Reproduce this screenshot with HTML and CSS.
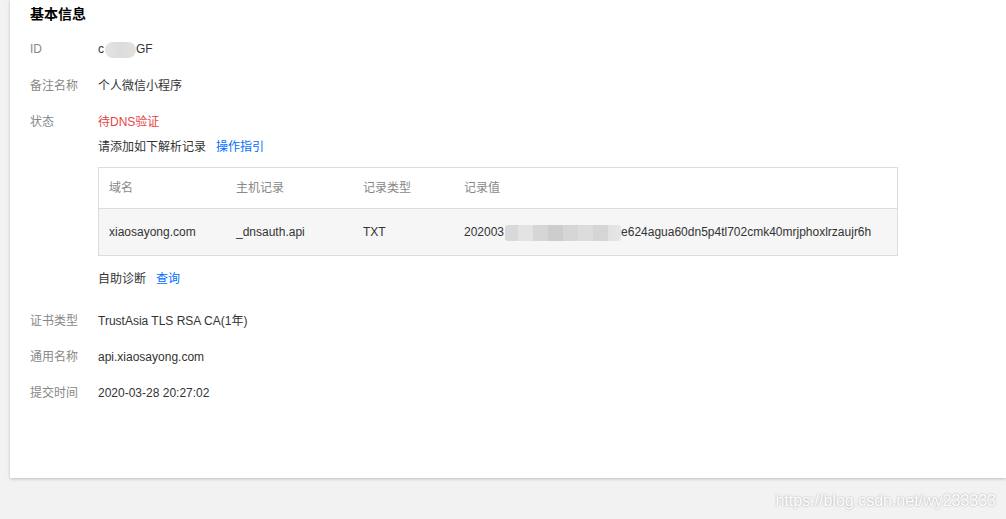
FILE: index.html
```html
<!DOCTYPE html>
<html lang="zh-CN">
<head>
<meta charset="utf-8">
<title>基本信息</title>
<link rel="stylesheet" href="styles.css">
</head>
<body>
<div class="page">
  <div class="card">
    <h3 class="title">基本信息</h3>
    <div class="row first">
      <div class="label">ID</div>
      <div class="value">c<span class="blur blur-id"></span>GF</div>
    </div>
    <div class="row r2">
      <div class="label">备注名称</div>
      <div class="value">个人微信小程序</div>
    </div>
    <div class="row">
      <div class="label">状态</div>
      <div class="value">
        <div class="line danger">待DNS验证</div>
        <div class="line tip">请添加如下解析记录<a class="link gap" href="#">操作指引</a></div>
        <table class="records">
          <thead>
            <tr><th class="c1">域名</th><th class="c2">主机记录</th><th class="c3">记录类型</th><th>记录值</th></tr>
          </thead>
          <tbody>
            <tr><td>xiaosayong.com</td><td>_dnsauth.api</td><td>TXT</td><td>202003<span class="blur blur-val"></span>e624agua60dn5p4tl702cmk40mrjphoxlrzaujr6h</td></tr>
          </tbody>
        </table>
        <div class="line diag">自助诊断<a class="link gap" href="#">查询</a></div>
      </div>
    </div>
    <div class="row cert">
      <div class="label">证书类型</div>
      <div class="value">TrustAsia TLS RSA CA(1年)</div>
    </div>
    <div class="row">
      <div class="label">通用名称</div>
      <div class="value">api.xiaosayong.com</div>
    </div>
    <div class="row">
      <div class="label">提交时间</div>
      <div class="value">2020-03-28 20:27:02</div>
    </div>
  </div>
  <div class="watermark">https://blog.csdn.net/wy233333</div>
</div>
</body>
</html>
```
FILE: styles.css
```css
html, body {
  margin: 0;
  padding: 0;
  background: #f2f2f2;
}
body {
  font-family: "Liberation Sans", Arial, "Noto Sans CJK SC", sans-serif;
  font-size: 12px;
  color: #333;
  width: 1006px;
  height: 519px;
  overflow: hidden;
}
.page {
  position: relative;
  height: 519px;
}
.card {
  margin-left: 10px;
  width: 996px;
  height: 478px;
  box-sizing: border-box;
  background: #fff;
  box-shadow: 0 1px 3px rgba(0, 0, 0, 0.22);
  padding: 4px 20px 0 20px;
}
.title {
  margin: 0;
  font-size: 14px;
  line-height: 20px;
  font-weight: bold;
  color: #000;
}
.row {
  display: flex;
  margin-top: 16px;
  line-height: 20px;
}
.row.first { margin-top: 15px; }
.row.r2 { margin-top: 17px; }
.row.cert { margin-top: 22px; }
.label {
  width: 68px;
  flex: none;
  color: #888;
}
.value {
  flex: 1;
  color: #333;
}
.line { line-height: 20px; }
.danger { color: #e54545; }
.tip { margin-top: 5px; }
.link {
  color: #006eff;
  text-decoration: none;
}
.gap { margin-left: 10px; }
.blur {
  display: inline-block;
  vertical-align: middle;
  height: 16px;
  border-radius: 8px;
}
.blur-id {
  width: 31px;
  margin: 0 0 0 1px;
  background: linear-gradient(90deg, #e4e4e4 0, #dcdcdc 50%, #e2e2e2 100%);
}
.blur-val {
  width: 116px;
  margin: 0 0 0 1px;
  border-radius: 3px;
  background: linear-gradient(90deg,
    #d9d9d9 0, #d9d9d9 13px,
    #e3e3e3 13px, #e3e3e3 28px,
    #d6d6d6 28px, #d6d6d6 43px,
    #cdcdcd 43px, #cdcdcd 58px,
    #d6d6d6 58px, #d6d6d6 73px,
    #dcdcdc 73px, #dcdcdc 88px,
    #d5d5d5 88px, #d5d5d5 103px,
    #e2e2e2 103px, #e6e6e6 116px);
}
.records {
  margin-top: 10px;
  width: 800px;
  border-collapse: collapse;
  border: 1px solid #ddd;
  table-layout: fixed;
}
.records th, .records td {
  text-align: left;
  padding: 0 0 0 10px;
  white-space: nowrap;
}
.records th {
  height: 40px;
  font-weight: normal;
  color: #888;
  background: #fff;
  border-bottom: 1px solid #ddd;
}
.records td {
  height: 46px;
  background: #f6f6f6;
  color: #333;
}
.records .c1 { width: 117px; }
.records .c2 { width: 117px; }
.records .c3 { width: 91px; }
.diag { margin-top: 13px; }
.watermark {
  position: absolute;
  right: 10px;
  top: 491px;
  font-size: 16px;
  line-height: 20px;
  color: #fff;
  text-shadow: 0 0 2px rgba(0, 0, 0, 0.35);
  font-family: "Liberation Sans", Arial, sans-serif;
}
```
